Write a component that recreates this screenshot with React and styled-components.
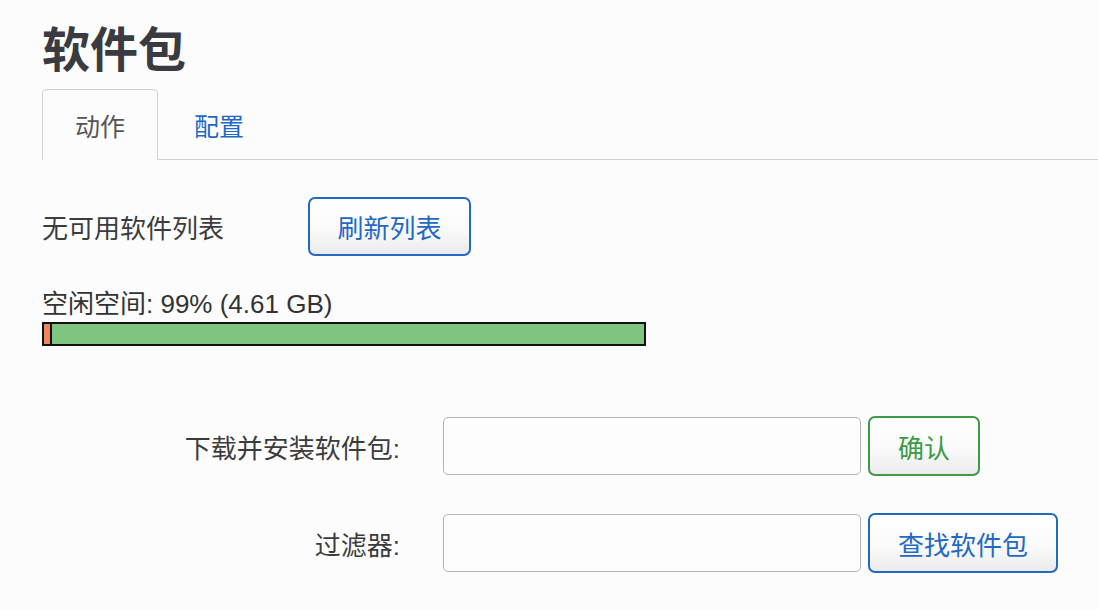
import React from "react";
import styled, { createGlobalStyle } from "styled-components";

const GlobalStyle = createGlobalStyle`
  html, body {
    margin: 0;
    padding: 0;
    background: #fcfcfd;
  }
  body {
    font-family: "Liberation Sans", "Noto Sans CJK SC", sans-serif;
    color: #333;
  }
`;

const Page = styled.div`
  width: 1098px;
  height: 610px;
  overflow: hidden;
  padding: 24px 0 0 42px;
  box-sizing: border-box;
`;

const Title = styled.h1`
  margin: 0;
  font-size: 48px;
  line-height: 54px;
  font-weight: 700;
  color: #3a3a40;
`;

const TabBar = styled.ul`
  display: flex;
  list-style: none;
  margin: 11px 0 0 0;
  padding: 0;
  border-bottom: 1px solid #cfcfd4;
`;

const Tab = styled.li`
  height: 69px;
  display: flex;
  align-items: center;
  padding: 0 32px;
  margin-right: 3px;
  margin-bottom: -1px;
  font-size: 25px;
  color: ${(props) => (props.active ? "#555" : "#1f68c8")};
  background: ${(props) => (props.active ? "#fcfcfd" : "transparent")};
  border: 1px solid ${(props) => (props.active ? "#cfcfd4" : "transparent")};
  border-bottom-color: ${(props) => (props.active ? "#fcfcfd" : "transparent")};
  border-radius: 5px 5px 0 0;
  cursor: pointer;
`;

const Row = styled.div`
  display: flex;
  align-items: center;
  margin-top: ${(props) => props.top || "0px"};
`;

const Label = styled.div`
  width: ${(props) => props.width || "auto"};
  flex-shrink: 0;
  font-size: 26px;
  color: #3c3c3c;
  text-align: ${(props) => (props.right ? "right" : "left")};
`;

const Button = styled.button`
  height: ${(props) => props.height || "60px"};
  width: ${(props) => props.width || "auto"};
  margin-left: ${(props) => props.gap || "0px"};
  padding: 0;
  font-family: inherit;
  font-size: 26px;
  color: ${(props) => props.color};
  border: 2px solid ${(props) => props.color};
  border-radius: 7px;
  background: linear-gradient(#ffffff 0%, #fafafa 55%, #ebebed 100%);
  cursor: pointer;
`;

const SpaceText = styled.div`
  margin-top: 33px;
  font-size: 26px;
  line-height: 30px;
  color: #333;
`;

const Bar = styled.div`
  display: flex;
  width: 604px;
  height: 24px;
  margin-top: 3px;
  box-sizing: border-box;
  border: 2px solid #111;
  background: #7fc47f;
`;

const BarUsed = styled.div`
  height: 100%;
  background: #f0845a;
  border-right: 2px solid #111;
`;

const Input = styled.input`
  width: 418px;
  height: 58px;
  box-sizing: border-box;
  margin-left: 43px;
  border: 1px solid #b4b4b8;
  border-radius: 5px;
  background: #fdfdfe;
  font-size: 22px;
  padding: 0 12px;
  outline: none;
`;

const Form = styled.div`
  margin-top: 70px;
  display: flex;
  flex-direction: column;
  gap: 37px;
`;

export default function App() {
  const used = 1;

  return (
    <Page>
      <GlobalStyle />
      <Title>软件包</Title>
      <TabBar>
        <Tab active>动作</Tab>
        <Tab>配置</Tab>
      </TabBar>

      <Row top="37px">
        <Label width="266px">无可用软件列表</Label>
        <Button width="163px" height="59px" color="#2369c4">
          刷新列表
        </Button>
      </Row>

      <SpaceText>空闲空间: 99% (4.61 GB)</SpaceText>
      <Bar>
        <BarUsed style={{ width: `${used}%` }} />
      </Bar>

      <Form>
        <Row>
          <Label width="358px" right>
            下载并安装软件包:
          </Label>
          <Input type="text" />
          <Button width="112px" gap="7px" color="#3d9a45">
            确认
          </Button>
        </Row>
        <Row>
          <Label width="358px" right>
            过滤器:
          </Label>
          <Input type="text" />
          <Button width="190px" gap="7px" color="#2369c4">
            查找软件包
          </Button>
        </Row>
      </Form>
    </Page>
  );
}
